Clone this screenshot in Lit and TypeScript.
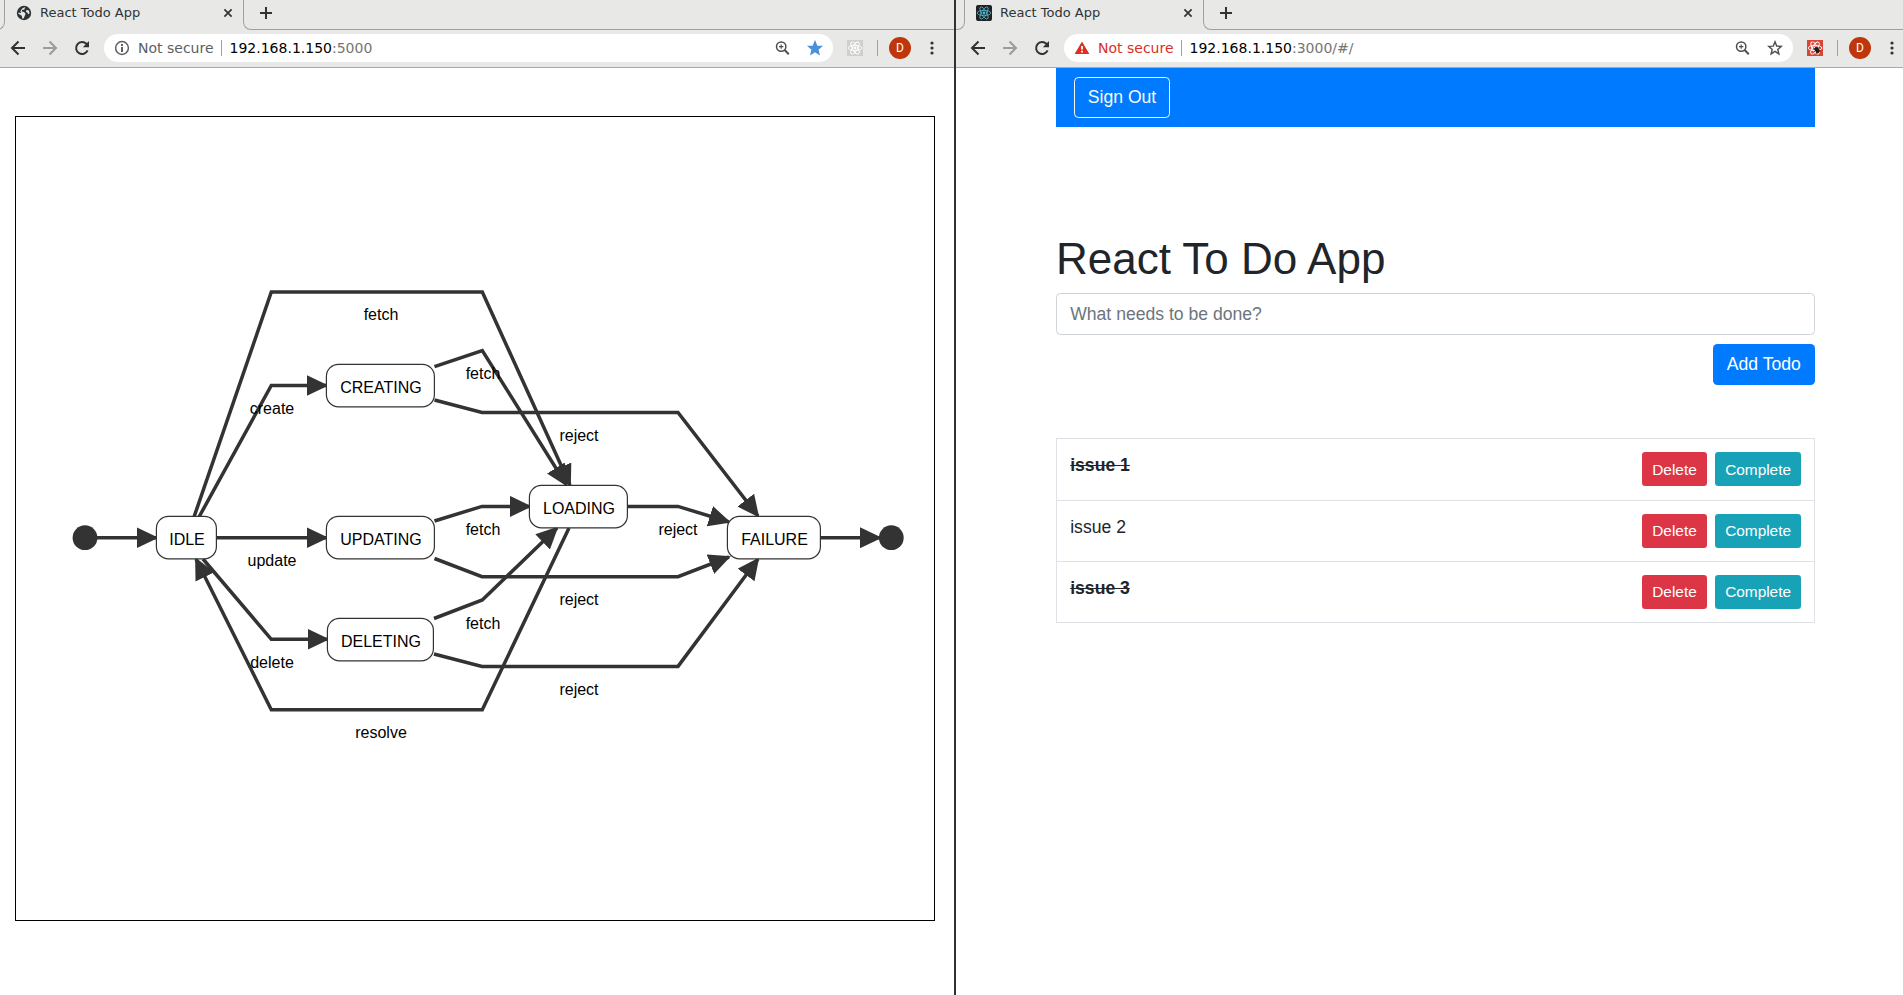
import { LitElement, html, svg, css, nothing } from "lit";
import { customElement, property, state } from "lit/decorators.js";

const reactOrbits = (stroke: string, width: number) => svg`
  <g fill="none" stroke=${stroke} stroke-width=${width}>
    <ellipse cx="8" cy="8" rx="6.8" ry="2.6"></ellipse>
    <ellipse cx="8" cy="8" rx="6.8" ry="2.6" transform="rotate(60 8 8)"></ellipse>
    <ellipse cx="8" cy="8" rx="6.8" ry="2.6" transform="rotate(120 8 8)"></ellipse>
  </g>
  <circle cx="8" cy="8" r="1.4" fill=${stroke}></circle>`;

@customElement("browser-window")
class BrowserWindow extends LitElement {
  @property() tabTitle = "";
  @property() host = "";
  @property() path = "";
  @property({ type: Boolean }) danger = false;
  @property({ type: Boolean }) bookmarked = false;

  static styles = css`
    :host {
      display: flex;
      flex-direction: column;
      min-height: 100vh;
      background: #fff;
      font-family: "DejaVu Sans", sans-serif;
      color: #2e3436;
    }
    .strip {
      display: flex;
      height: 30px;
      background: #e8e8e6;
    }
    .edge-left,
    .edge-right {
      box-sizing: border-box;
      border-bottom: 1px solid #a1a19c;
    }
    .edge-left {
      width: 9px;
      border-right: 1px solid #a1a19c;
      border-bottom-right-radius: 8px;
    }
    .edge-right {
      flex: 1;
      border-left: 1px solid #a1a19c;
      border-bottom-left-radius: 8px;
      padding-left: 16px;
    }
    .tab {
      box-sizing: border-box;
      width: 238px;
      height: 25px;
      padding: 0 7px 0 11px;
      display: flex;
      align-items: center;
      gap: 8px;
      font-size: 13px;
    }
    .title {
      flex: 1;
      white-space: nowrap;
    }
    button {
      border: 0;
      padding: 0;
      background: none;
      color: inherit;
      font: inherit;
      display: flex;
      align-items: center;
      justify-content: center;
    }
    svg {
      display: block;
    }
    .edge-right button {
      height: 26px;
    }
    .toolbar {
      display: flex;
      align-items: center;
      padding: 4px 0 5px 6px;
      background: #e8e8e6;
      border-bottom: 1px solid #a9a9a6;
    }
    .nav {
      width: 32px;
      height: 28px;
    }
    .dim {
      color: #9a9b9a;
    }
    .omnibox {
      flex: 1;
      box-sizing: border-box;
      height: 28px;
      margin: 0 14px 0 6px;
      padding: 0 10px;
      display: flex;
      align-items: center;
      border-radius: 14px;
      background: #fff;
      font-size: 14px;
    }
    .security {
      display: flex;
      align-items: center;
      gap: 8px;
      color: #5c6062;
      white-space: nowrap;
    }
    .danger {
      color: #d93025;
    }
    .bar {
      width: 1px;
      height: 16px;
      background: #a1a19c;
    }
    .omnibox .bar {
      margin: 0 8px 0 7px;
    }
    .url {
      flex: 1;
      color: #757575;
      white-space: nowrap;
    }
    .host {
      color: #000;
    }
    .actions {
      display: flex;
      gap: 17px;
      color: #4a4f51;
    }
    .starred {
      color: #4a90d9;
    }
    .toolbar > .bar {
      margin: 0 11px 0 14px;
    }
    .avatar {
      width: 22px;
      height: 22px;
      border-radius: 50%;
      background: #bf360c;
      color: #fff;
      font: 12px Roboto, sans-serif;
    }
    .menu {
      width: 6px;
      height: 22px;
      margin: 0 var(--menu-space, 8px) 0 18px;
    }
    .page {
      flex: 1;
    }
  `;

  render() {
    return html`
      <div class="strip">
        <div class="edge-left"></div>
        <div class="tab">
          ${this.danger
            ? html`<svg width="16" height="16" viewBox="0 0 16 16" aria-hidden="true">
                <rect width="16" height="16" rx="2" fill="#222"></rect>
                ${reactOrbits("#53b9d6", 0.8)}
              </svg>`
            : html`<svg width="16" height="16" viewBox="0 0 16 16" aria-hidden="true">
                <circle cx="8" cy="8" r="7.2" fill="#2e3436"></circle>
                <path
                  d="M9.2 2 8.4 4.4 6.2 5 5.6 6.6 8 7 9.6 8.8 8.6 11.2 7.6 13.6 6.2 13.4 5.8 10.8 2.4 8.8 2.4 7.4 5.2 8.2 4.4 6.2 6.2 3.4Z"
                  fill="#e8e8e6"
                ></path>
                <path d="M10.6 5 12.8 5.4 13.6 8.2 12.4 9.2 11.2 7.6 9.8 6.8Z" fill="#e8e8e6"></path>
              </svg>`}
          <span class="title">${this.tabTitle}</span>
          <button aria-label="Close tab">
            <svg width="16" height="16" viewBox="0 0 16 16">
              <path d="M4.4 4.4 11.6 11.6M11.6 4.4 4.4 11.6" stroke="currentColor" stroke-width="1.7"></path>
            </svg>
          </button>
        </div>
        <div class="edge-right">
          <button aria-label="New tab">
            <svg width="12" height="12" viewBox="0 0 12 12">
              <path d="M6 0V12M0 6H12" stroke="currentColor" stroke-width="2"></path>
            </svg>
          </button>
        </div>
      </div>
      <div class="toolbar">
        <button class="nav" aria-label="Back">
          <svg width="16" height="16" viewBox="0 0 16 16" fill="none" stroke="currentColor" stroke-width="2">
            <path d="M15 8H2.5M8.5 1.5 2 8 8.5 14.5"></path>
          </svg>
        </button>
        <button class="nav dim" aria-label="Forward">
          <svg width="16" height="16" viewBox="0 0 16 16" fill="none" stroke="currentColor" stroke-width="2">
            <path d="M1 8H13.5M7.5 1.5 14 8 7.5 14.5"></path>
          </svg>
        </button>
        <button class="nav" aria-label="Reload">
          <svg width="16" height="16" viewBox="0 0 16 16">
            <path
              d="M13.6 10.4A6 6 0 1 1 12.4 3.8L14 5.4"
              fill="none"
              stroke="currentColor"
              stroke-width="2"
            ></path>
            <path d="M15 1V7.2H8.8Z" fill="currentColor"></path>
          </svg>
        </button>
        <div class="omnibox">
          <span class="security ${this.danger ? "danger" : ""}">
            ${this.danger
              ? html`<svg width="16" height="16" viewBox="0 0 16 16" aria-hidden="true">
                  <path d="M8 1.5 15.4 14H.6Z" fill="currentColor"></path>
                  <path d="M7.1 6H8.9V9.6H7.1ZM7.1 10.8H8.9V12.5H7.1Z" fill="#fff"></path>
                </svg>`
              : html`<svg width="16" height="16" viewBox="0 0 16 16" aria-hidden="true">
                  <circle cx="8" cy="8" r="6.4" fill="none" stroke="currentColor" stroke-width="1.5"></circle>
                  <path d="M7 7H9V12H7ZM7 4H9V6H7Z" fill="currentColor"></path>
                </svg>`}
            Not secure
          </span>
          <span class="bar"></span>
          <span class="url" role="textbox" aria-label="Address"
            ><span class="host">${this.host}</span>${this.path}</span
          >
          <span class="actions">
            <button aria-label="Zoom">
              <svg width="16" height="16" viewBox="0 0 16 16" fill="none" stroke="currentColor">
                <circle cx="7.2" cy="6.6" r="4.7" stroke-width="1.5"></circle>
                <path d="M10.6 10 14.8 14.2" stroke-width="2"></path>
                <path d="M7.2 4.4V8.8M5 6.6H9.4" stroke-width="1.2"></path>
              </svg>
            </button>
            <button class=${this.bookmarked ? "starred" : ""} aria-label="Bookmark">
              <svg width="16" height="16" viewBox="0 0 16 16">
                <path
                  d="M8 1.8 9.7 6.1 14.3 6.4 10.8 9.4 11.9 13.9 8 11.4 4.1 13.9 5.2 9.4 1.7 6.4 6.3 6.1Z"
                  fill=${this.bookmarked ? "currentColor" : "none"}
                  stroke="currentColor"
                  stroke-width="1.4"
                ></path>
              </svg>
            </button>
          </span>
        </div>
        <button aria-label="React Developer Tools">
          <svg width="16" height="16" viewBox="0 0 16 16">
            <rect width="16" height="16" fill=${this.danger ? "#dc4535" : "#cfcfce"}></rect>
            ${reactOrbits("#fff", 0.9)}
            ${this.danger
              ? svg`<g stroke="#1d1a1a" stroke-width="0.8" fill="#1d1a1a"><ellipse cx="10" cy="10" rx="1.7" ry="3" transform="rotate(-35 10 10)"></ellipse>
                  <path d="M6.5 8.8 13.6 11M7 12 12.5 7.4M9.4 13.8 10.8 6.8" fill="none"></path></g>`
              : nothing}
          </svg>
        </button>
        <span class="bar"></span>
        <button class="avatar" aria-label="Profile">D</button>
        <button class="menu" aria-label="Menu">
          <svg width="4" height="14" viewBox="0 0 4 14" fill="currentColor">
            <circle cx="2" cy="2" r="1.6"></circle>
            <circle cx="2" cy="7" r="1.6"></circle>
            <circle cx="2" cy="12" r="1.6"></circle>
          </svg>
        </button>
      </div>
      <div class="page"><slot></slot></div>
    `;
  }
}

type Node = { label: string; x: number; y: number; w: number };
type Edge = { points: string; label?: string; lx?: number; ly?: number };

const NODES: Node[] = [
  { label: "IDLE", x: 156, y: 516, w: 60 },
  { label: "CREATING", x: 326, y: 364, w: 108 },
  { label: "UPDATING", x: 326, y: 516, w: 108 },
  { label: "DELETING", x: 327, y: 618, w: 106 },
  { label: "LOADING", x: 529, y: 485, w: 98 },
  { label: "FAILURE", x: 727, y: 516, w: 93 },
];

const EDGES: Edge[] = [
  { points: "97,537.7 156.5,537.7" },
  { points: "194,517 271.3,292 482.3,292 570,485", label: "fetch", lx: 381, ly: 320 },
  { points: "199,517 271.3,385.5 326.5,385.5", label: "create", lx: 272, ly: 414 },
  { points: "217,537.7 326.5,537.7", label: "update", lx: 272, ly: 566 },
  { points: "203,559 271.3,639.3 327.5,639.3", label: "delete", lx: 272, ly: 668 },
  { points: "569,528 482.3,709.8 271.3,709.8 196,559", label: "resolve", lx: 381, ly: 738 },
  { points: "434.5,366.7 482.3,350.5 566.5,485", label: "fetch", lx: 483, ly: 379 },
  { points: "434.5,400 482,412.5 678,412.5 758,516", label: "reject", lx: 579, ly: 441 },
  { points: "434.5,521 482,506.4 530,506.4", label: "fetch", lx: 483, ly: 535 },
  { points: "434.5,558.5 482,576.7 678,576.7 729,557", label: "reject", lx: 579, ly: 605 },
  { points: "628,506.4 678,506.4 729,522", label: "reject", lx: 678, ly: 535 },
  { points: "434,618.5 482.3,600 557,528", label: "fetch", lx: 483, ly: 629 },
  { points: "434,654 482,666.4 678,666.4 758,559", label: "reject", lx: 579, ly: 695 },
  { points: "820,537.7 880,537.7" },
];

@customElement("state-diagram")
class StateDiagram extends LitElement {
  static styles = css`
    :host {
      display: block;
      padding: 48px 19px 0;
    }
    .canvas {
      display: block;
      box-sizing: border-box;
      width: 100%;
      border: 1px solid #000;
      font-family: "Liberation Sans", Arial, sans-serif;
      font-size: 16px;
      text-anchor: middle;
    }
    .edge {
      fill: none;
      stroke: #333;
      stroke-width: 3.5;
    }
    .node {
      fill: #fff;
      stroke: #333;
      stroke-width: 1.2;
    }
    .solid {
      fill: #333;
    }
  `;

  render() {
    return html`
      <svg class="canvas" viewBox="16 117 918 803" role="img" aria-label="State machine">
        <defs>
          <marker
            id="arrow"
            markerUnits="userSpaceOnUse"
            markerWidth="23"
            markerHeight="22"
            refX="20"
            refY="10.5"
            orient="auto"
          >
            <path class="solid" d="M0 0 22 10.5 0 21Z"></path>
          </marker>
        </defs>
        ${EDGES.map((e) => svg`<polyline class="edge" points=${e.points} marker-end="url(#arrow)"></polyline>`)}
        <circle class="solid" cx="85" cy="537.7" r="12.4"></circle>
        <circle class="solid" cx="891.3" cy="537.7" r="12.4"></circle>
        ${NODES.map(
          (n) => svg`
            <rect class="node" x=${n.x + 0.4} y=${n.y + 0.4} width=${n.w} height="42.4" rx="12"></rect>
            <text x=${n.x + n.w / 2 + 1} y=${n.y + 29}>${n.label}</text>`,
        )}
        ${EDGES.map((e) => (e.label ? svg`<text x=${e.lx} y=${e.ly}>${e.label}</text>` : nothing))}
      </svg>
    `;
  }
}

type Todo = { title: string; done: boolean };

@customElement("todo-app")
class TodoApp extends LitElement {
  @state() todos: Todo[] = [
    { title: "issue 1", done: true },
    { title: "issue 2", done: false },
    { title: "issue 3", done: true },
  ];

  static styles = css`
    :host {
      display: block;
      padding: 0 88px 0 100px;
      font-family: "Liberation Sans", Arial, sans-serif;
      font-size: 16px;
      line-height: 24px;
      color: #212529;
    }
    /* The page is viewed at the browser's 110% zoom level. */
    .container {
      zoom: 1.1;
    }
    nav {
      display: flex;
      padding: 8px 16px;
      background: #007bff;
    }
    button {
      font: inherit;
      color: #fff;
      border: 1px solid transparent;
      border-radius: 4px;
      padding: 6px 12px;
    }
    .outline {
      background: transparent;
      border-color: #f8f9fa;
      color: #f8f9fa;
    }
    h1 {
      margin: 96px 0 7px;
      font-size: 40px;
      line-height: 48px;
      font-weight: 400;
    }
    form {
      display: flex;
      flex-direction: column;
      align-items: flex-end;
      gap: 8px;
      margin-bottom: 48px;
    }
    input {
      box-sizing: border-box;
      width: 100%;
      height: 38px;
      padding: 6px 12px;
      border: 1px solid #ced4da;
      border-radius: 4px;
      font: inherit;
    }
    input::placeholder {
      color: #6c757d;
      opacity: 1;
    }
    .primary {
      background: #007bff;
    }
    ul {
      margin: 0;
      padding: 0;
      list-style: none;
      border: 1px solid #dee2e6;
      border-bottom: 0;
    }
    li {
      display: flex;
      align-items: flex-start;
      gap: 8px;
      padding: 12px;
      border-bottom: 1px solid #dee2e6;
    }
    .text {
      flex: 1;
    }
    .done {
      font-weight: 700;
      text-decoration: line-through;
    }
    .small {
      font-size: 14px;
      line-height: 21px;
      padding: 4px 8px;
      border-radius: 3px;
    }
    .delete {
      background: #dc3545;
    }
    .complete {
      background: #17a2b8;
    }
  `;

  render() {
    return html`
      <div class="container">
        <nav><button class="outline">Sign Out</button></nav>
        <h1>React To Do App</h1>
        <form @submit=${(e: Event) => e.preventDefault()}>
          <input type="text" aria-label="New todo" placeholder="What needs to be done?" />
          <button class="primary">Add Todo</button>
        </form>
        <ul>
          ${this.todos.map(
            (t) => html`<li>
              <span class="text"><span class=${t.done ? "done" : ""}>${t.title}</span></span>
              <button class="small delete">Delete</button>
              <button class="small complete">Complete</button>
            </li>`,
          )}
        </ul>
      </div>
    `;
  }
}

@customElement("app-root")
class AppRoot extends LitElement {
  static styles = css`
    :host {
      display: flex;
      min-height: 100vh;
      overflow: hidden;
      background: #fff;
    }
    .pane {
      min-width: 0;
      overflow: hidden;
    }
    .first {
      flex: 954 1 0;
    }
    .second {
      flex: 947 1 0;
    }
    .divider {
      width: 2px;
      background: #2e3436;
    }
    .tucked {
      margin-left: -4px;
      --menu-space: 19px;
    }
  `;

  render() {
    return html`
      <div class="pane first">
        <browser-window class="tucked" tabTitle="React Todo App" host="192.168.1.150" path=":5000" bookmarked>
          <state-diagram></state-diagram>
        </browser-window>
      </div>
      <div class="divider"></div>
      <div class="pane second">
        <browser-window tabTitle="React Todo App" host="192.168.1.150" path=":3000/#/" danger>
          <todo-app></todo-app>
        </browser-window>
      </div>
    `;
  }
}
